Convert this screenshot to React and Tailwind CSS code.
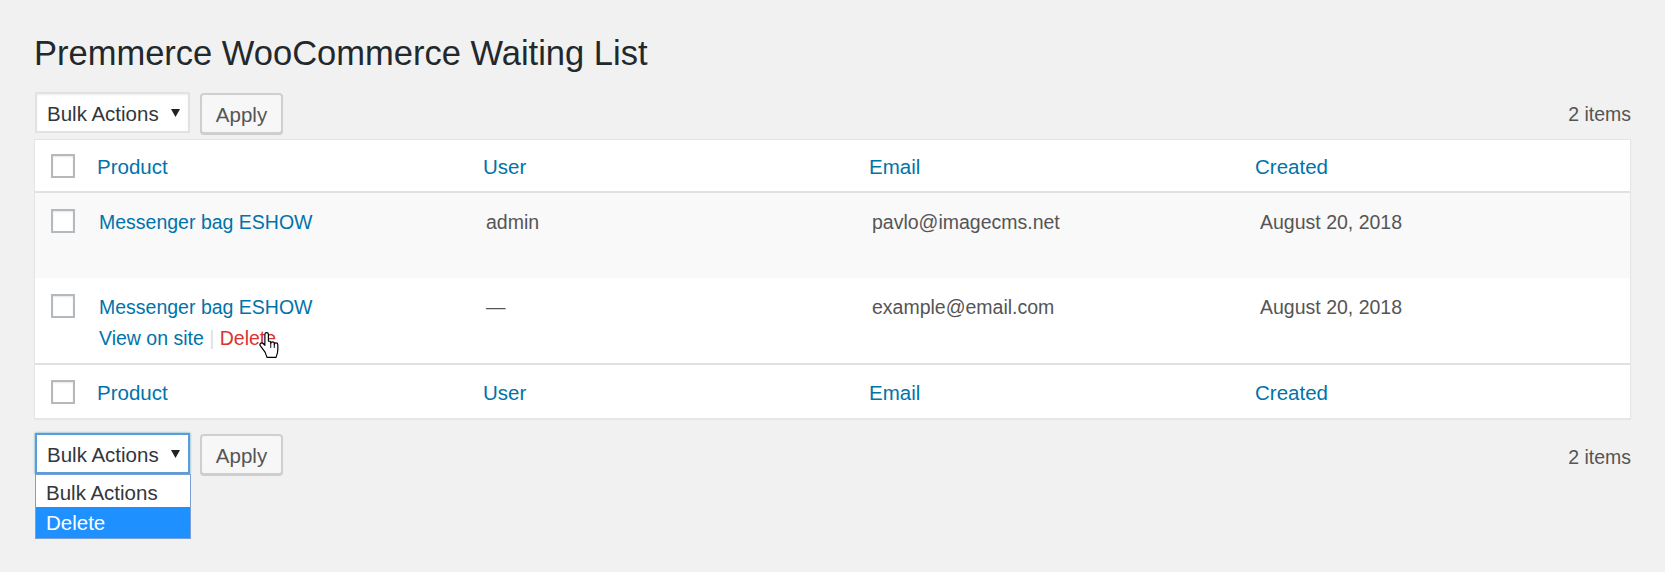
const cols = 'grid grid-cols-[51px_repeat(4,minmax(0,1fr))]'
const heads = ['Product', 'User', 'Email', 'Created']

const rows = [
  { product: 'Messenger bag ESHOW', user: 'admin', email: 'pavlo@imagecms.net', created: 'August 20, 2018', striped: true },
  { product: 'Messenger bag ESHOW', user: '—', email: 'example@email.com', created: 'August 20, 2018', actions: true },
]

function Checkbox() {
  return <span className="block w-6 h-6 bg-white border-2 border-[#b4b9be] shadow-[inset_0_1px_2px_rgba(0,0,0,0.1)]" />
}

function BulkSelect({ focused }) {
  return (
    <div
      className={`relative flex items-center w-[155px] h-[41px] bg-white pl-[10px] pt-[3px] text-[20.5px] text-[#32373c] ${
        focused
          ? 'border-2 border-[#5b9dd9] shadow-[0_0_2px_rgba(30,140,190,0.8)]'
          : 'border-2 border-[#e2e2e2] shadow-[inset_0_1px_2px_rgba(0,0,0,0.07)]'
      }`}
    >
      <span>Bulk Actions</span>
      <svg className="absolute right-[8px] top-1/2 -translate-y-1/2" width="9" height="9" viewBox="0 0 9 9">
        <path d="M0 0.5H9L4.5 8.5Z" fill="#222" />
      </svg>
    </div>
  )
}

function ApplyButton() {
  return (
    <button className="mt-px w-[83px] h-[41px] pt-[3px] rounded-[4px] border-2 border-[#cfcfcf] bg-[#f7f7f7] shadow-[0_1px_0_#ccc] text-[20.5px] text-[#555]">
      Apply
    </button>
  )
}

function HandCursor() {
  return (
    <svg className="absolute left-[39px] top-[5px]" width="20" height="26" viewBox="0 0 17 22">
      <path
        d="M6.5 0.5C5.7 0.5 5 1.2 5 2V11.2L3.5 9.7C2.9 9.1 1.9 9.1 1.3 9.7C0.7 10.3 0.7 11.2 1.2 11.8L5 16.8C5.7 18.6 6.3 20 6.8 21.5H14.5C15.3 19.5 16 17.5 16 15V10.7C16 9.9 15.3 9.2 14.5 9.2C13.7 9.2 13 9.9 13 10.7V9.8C13 9 12.3 8.3 11.5 8.3C10.7 8.3 10 9 10 9.8V9.1C10 8.3 9.3 7.6 8.5 7.6C8.3 7.6 8.1 7.6 8 7.7V2C8 1.2 7.3 0.5 6.5 0.5Z"
        fill="#fff"
        stroke="#000"
        strokeWidth="1"
        strokeLinejoin="round"
      />
      <path d="M10 9.8V13.5M13 10.7V13.5" stroke="#000" strokeWidth="0.8" />
    </svg>
  )
}

function HeaderRow({ bottom }) {
  return (
    <div className={`${cols} h-[53px] items-center bg-white ${bottom ? '' : 'border-b-2 border-[#e1e1e1]'}`}>
      <div className="pl-4">
        <Checkbox />
      </div>
      {heads.map((h) => (
        <div key={h} className="pl-[11px] pt-[4px] text-[20.5px] text-[#0073aa]">
          {h}
        </div>
      ))}
    </div>
  )
}

function DataRow({ row }) {
  return (
    <div className={`${cols} h-[85px] text-[19.5px] ${row.striped ? 'bg-[#f9f9f9]' : 'bg-white'}`}>
      <div className="pl-4 pt-4">
        <Checkbox />
      </div>
      <div className="pl-[13px] pt-[15px]">
        <div className="leading-[29px] text-[#0073aa]">{row.product}</div>
        <div className={`pt-[1px] leading-[30px] ${row.actions ? '' : 'invisible'}`}>
          <span className="text-[#0073aa]">View on site</span>
          <span className="text-[#ddd]"> | </span>
          <span className="relative text-[#dc3232]">
            Delete
            {row.actions && <HandCursor />}
          </span>
        </div>
      </div>
      <div className="pl-[14px] pt-[15px] leading-[29px] text-[#555]">{row.user}</div>
      <div className="pl-[14px] pt-[15px] leading-[29px] text-[#555]">{row.email}</div>
      <div className="pl-[16px] pt-[15px] leading-[29px] text-[#555]">{row.created}</div>
    </div>
  )
}

export default function App() {
  return (
    <div className="min-h-screen bg-[#f1f1f1] pl-[34px] pr-[34px] pt-[31px] font-['Liberation_Sans',Arial,sans-serif]">
      <h1 className="text-[34.5px] leading-[45px] text-[#23282d]">Premmerce WooCommerce Waiting List</h1>

      <div className="mt-4 mb-[5px] flex items-start gap-[10px] pl-px">
        <BulkSelect />
        <ApplyButton />
        <div className="ml-auto self-center pt-[3px] text-[19.5px] text-[#555]">2 items</div>
      </div>

      <div className="border border-[#e5e5e5] shadow-[0_1px_1px_rgba(0,0,0,0.04)]">
        <HeaderRow />
        {rows.map((r, i) => (
          <DataRow key={i} row={r} />
        ))}
        <div className="border-t-2 border-[#e1e1e1]">
          <HeaderRow bottom />
        </div>
      </div>

      <div className="mt-[14px] flex items-start gap-[10px] pl-px">
        <div className="relative">
          <BulkSelect focused />
          <div className="absolute left-0 top-[41px] w-[156px] bg-white border border-[#7a9fd4] text-[20.5px]">
            <div className="h-[32px] leading-[32px] pt-[2px] pl-[10px] text-[#32373c]">Bulk Actions</div>
            <div className="h-[31px] leading-[31px] pl-[10px] bg-[#1e90ff] text-white">Delete</div>
          </div>
        </div>
        <ApplyButton />
        <div className="ml-auto self-center pt-[7px] text-[19.5px] text-[#555]">2 items</div>
      </div>
    </div>
  )
}
